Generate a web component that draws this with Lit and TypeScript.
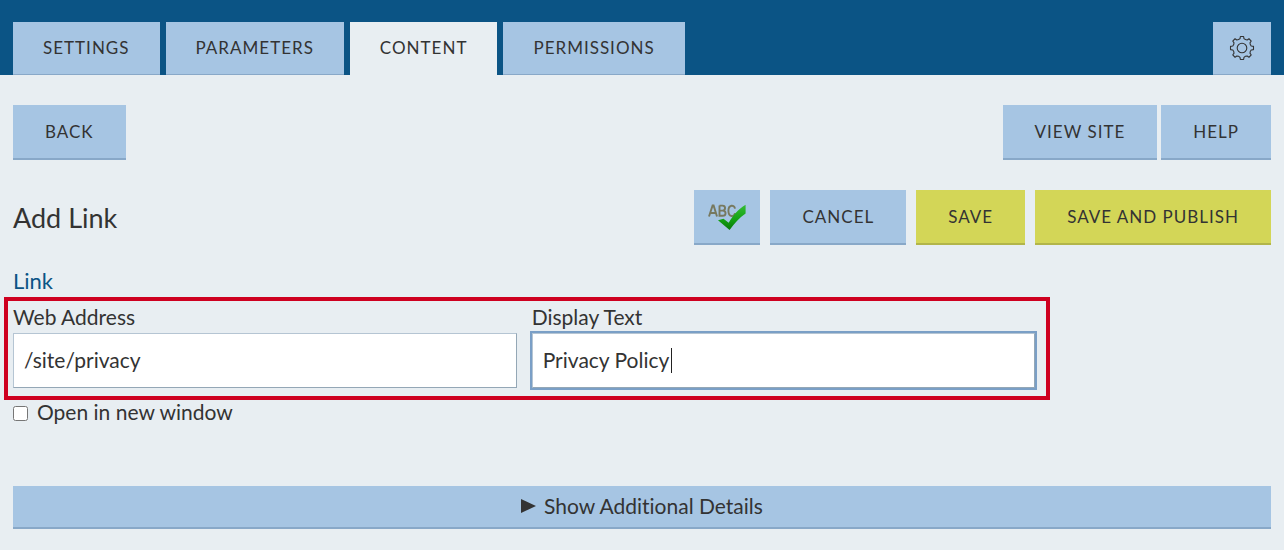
import { LitElement, html, css, svg } from "lit";
import { customElement, state } from "lit/decorators.js";
import { classMap } from "lit/directives/class-map.js";

const gear = (() => {
  const teeth = 8;
  const p = (r: number, deg: number) => {
    const a = (deg * Math.PI) / 180;
    return `${(13 + r * Math.sin(a)).toFixed(2)} ${(13 - r * Math.cos(a)).toFixed(2)}`;
  };
  let d = "";
  for (let i = 0; i < teeth; i++) {
    const c = i * 45;
    d += `${i ? "L" : "M"}${p(9.5, c - 12)}L${p(11.6, c - 8)}L${p(11.6, c + 8)}L${p(9.5, c + 12)}`;
    d += `Q${p(8.6, c + 22.5)} ${p(9.5, c + 33)}`;
  }
  return d + "Z";
})();

@customElement("app-root")
export class AppRoot extends LitElement {
  static styles = css`
    :host {
      display: block;
      min-height: 100vh;
      box-sizing: border-box;
      background: #e8eef2;
      color: #333;
      font-family: Lato, "Open Sans", sans-serif;
      font-size: 21px;
      line-height: 24px;
      font-variant-ligatures: none;
    }
    * { box-sizing: border-box; }
    .top {
      display: flex;
      align-items: flex-end;
      justify-content: space-between;
      height: 75px;
      padding: 0 13px;
      background: #0b5485;
    }
    .tabs { display: flex; gap: 6px; }
    .btn {
      height: 55px;
      margin: 0;
      padding: 0 32px;
      border: 0;
      border-bottom: 2px solid #88a8c8;
      border-radius: 0;
      background: #a6c5e3;
      color: #333;
      font: 400 17px/24px Lato, "Open Sans", sans-serif;
      letter-spacing: 1px;
      text-transform: uppercase;
      white-space: nowrap;
      cursor: pointer;
    }
    .tab { height: 53px; padding: 0 30px; border-bottom-width: 1px; }
    .active { background: #e8eef2; border-bottom-color: #e8eef2; }
    .icon { display: grid; place-items: center; padding: 0; }
    .gear { width: 58px; }
    .spell { width: 66px; }
    .go { background: #d3d657; border-bottom-color: #b2b54a; }
    main { padding: 30px 13px 21px; }
    .row {
      display: flex;
      align-items: center;
      justify-content: space-between;
      margin-bottom: 30px;
    }
    .pair { display: flex; gap: 4px; }
    .actions { display: flex; gap: 10px; }
    h1 { margin: 0; font-size: 27px; line-height: 32px; font-weight: 400; }
    h2 {
      margin: -8px 0 0;
      padding-bottom: 2px;
      font-size: 22px;
      line-height: 28px;
      font-weight: 400;
      color: #0b5485;
    }
    .fields {
      display: flex;
      gap: 15px;
      width: calc(80% + 40px);
      margin-left: -9px;
      padding: 4px 11px 8px 5px;
      border: 4px solid #ce0020;
    }
    .field { flex: 1; min-width: 0; }
    .field label { display: block; padding-bottom: 4px; }
    .box { position: relative; display: flex; }
    .text {
      width: 100%;
      height: 55px;
      padding: 0 10px 2px;
      border: 1px solid;
      border-color: #b5c5d3 #94a7b6 #94a7b6 #b5c5d3;
      border-radius: 0;
      outline: none;
      background: #fff;
      color: #333;
      font: inherit;
    }
    .focused { outline: 2px solid #7a9fc6; }
    .caret {
      position: absolute;
      left: 139px;
      top: 15px;
      width: 1px;
      height: 25px;
      background: #222;
    }
    .check { display: flex; align-items: center; gap: 9px; }
    .check input { width: 15px; height: 15px; margin: 2px 0 0; }
    .details {
      display: flex;
      align-items: center;
      justify-content: center;
      gap: 8px;
      width: 100%;
      height: 43px;
      margin-top: 62px;
      padding: 0 0 2px;
      border: 0;
      border-bottom: 2px solid #88a8c8;
      background: #a6c5e3;
      color: #333;
      font: inherit;
      cursor: pointer;
    }
  `;

  @state() private tab = "Content";

  render() {
    return html`
      <header class="top">
        <nav class="tabs">
          ${["Settings", "Parameters", "Content", "Permissions"].map(
            (t) => html`<button
              class=${classMap({ btn: true, tab: true, active: t === this.tab })}
              @click=${() => (this.tab = t)}
            >${t}</button>`
          )}
        </nav>
        <button class="btn tab icon gear" aria-label="Options">
          <svg width="26" height="26" viewBox="0 0 26 26" fill="none" stroke="#333" stroke-width="1.1" stroke-linejoin="round">
            ${svg`<path d=${gear} />`}
            <circle cx="13" cy="13" r="4.8" />
          </svg>
        </button>
      </header>
      <main>
        <div class="row">
          <button class="btn">Back</button>
          <div class="pair">
            <button class="btn">View Site</button>
            <button class="btn">Help</button>
          </div>
        </div>
        <div class="row">
          <h1>Add Link</h1>
          <div class="actions">
            <button class="btn icon spell" aria-label="Check spelling">
              <svg width="38" height="28" viewBox="0 0 38 28">
                <defs>
                  <linearGradient id="tick" x1="0" y1="0" x2="0" y2="1">
                    <stop offset="0" stop-color="#35bd35" />
                    <stop offset="0.6" stop-color="#12a012" />
                    <stop offset="1" stop-color="#087808" />
                  </linearGradient>
                </defs>
                <g fill="none" stroke="#77795f" stroke-width="1.9">
                  <path d="M1 13.5 4.6 2.5h1L9 13.5M2.3 10h5.600" />
                  <path d="M11.5 2.6v10.2h3.2c3.8 0 3.8-5.2 0-5.2h-3.2m3 0c3.4 0 3.4-5 0-5h-3" />
                  <path d="M27 5.6c-.7-4.2-6.6-4.2-6.6 2.2 0 6.6 5.900 6.600 6.600 2.400" />
                </g>
                <path d="M10 17.300 15.500 15.800 20.700 19.800C25 12.500 30 6.500 37.600 1.800V10.500C31 15 26.500 20.500 21.600 27Z" fill="url(#tick)" />
              </svg>
            </button>
            <button class="btn">Cancel</button>
            <button class="btn go">Save</button>
            <button class="btn go">Save and Publish</button>
          </div>
        </div>
        <h2>Link</h2>
        <div class="fields">
          <div class="field">
            <label for="address">Web Address</label>
            <div class="box"><input id="address" class="text" type="text" .value=${"/site/privacy"} /></div>
          </div>
          <div class="field">
            <label for="display">Display Text</label>
            <div class="box">
              <input id="display" class="text focused" type="text" .value=${"Privacy Policy"} />
              <span class="caret"></span>
            </div>
          </div>
        </div>
        <div class="check">
          <input id="blank" type="checkbox" />
          <label for="blank">Open in new window</label>
        </div>
        <button class="details">
          <svg width="15" height="14" viewBox="0 0 15 14"><path d="M0 0 15 7 0 14Z" fill="#333" /></svg>
          <span>Show Additional Details</span>
        </button>
      </main>
    `;
  }
}
